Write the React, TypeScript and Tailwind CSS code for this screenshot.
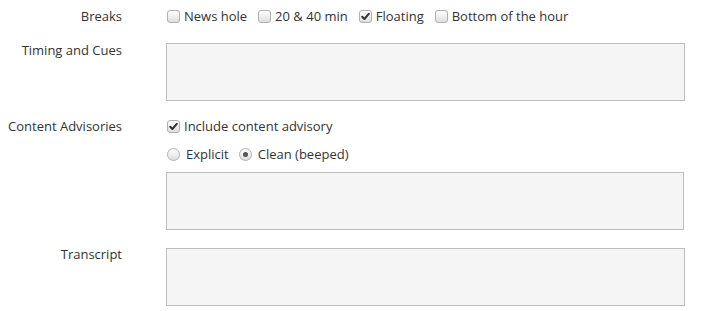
import React from "react";

const Box = ({ checked = false }: { checked?: boolean }) => (
  <span className="relative inline-block h-[13px] w-[13px] shrink-0 rounded-[3px] border border-[#b0b0b0] bg-gradient-to-b from-[#ffffff] to-[#dedede]">
    {checked && (
      <svg viewBox="0 0 13 13" className="absolute -left-px -top-px h-[13px] w-[13px]">
        <path d="M3.2 6.8 L5.4 9 L9.8 3.8" fill="none" stroke="#333" strokeWidth="2" strokeLinecap="round" strokeLinejoin="round" />
      </svg>
    )}
  </span>
);

const Radio = ({ checked = false }: { checked?: boolean }) => (
  <span className="relative flex h-[13px] w-[13px] shrink-0 items-center justify-center rounded-full border border-[#b0b0b0] bg-gradient-to-b from-[#ffffff] to-[#dedede]">
    {checked && <span className="h-[5px] w-[5px] rounded-full bg-[#555]" />}
  </span>
);

const Check = ({ label, checked }: { label: string; checked?: boolean }) => (
  <label className="mr-[11px] flex items-center gap-[4px]">
    <Box checked={checked} />
    <span>{label}</span>
  </label>
);

const Option = ({ label, checked }: { label: string; checked?: boolean }) => (
  <label className="mr-[10px] flex items-center gap-[6px]">
    <Radio checked={checked} />
    <span>{label}</span>
  </label>
);

const Area = ({ className = "" }: { className?: string }) => (
  <textarea className={`block h-[58px] w-full resize-none border border-[#bdbdbd] bg-[#f5f5f5] ${className}`} />
);

export default function App() {
  return (
    <div
      className="min-h-[311px] bg-white pr-[19px] pt-[6px] text-[13px] leading-[20px] text-[#333]"
      style={{ fontFamily: '"Open Sans", sans-serif' }}
    >
      <div className="grid grid-cols-[122px_1fr] gap-x-[44px]">
        <div className="text-right">Breaks</div>
        <div className="flex items-center pl-px">
          <Check label="News hole" />
          <Check label="20 & 40 min" />
          <Check label="Floating" checked />
          <Check label="Bottom of the hour" />
        </div>

        <div className="mt-[14px] text-right">Timing and Cues</div>
        <div className="mt-[17px]">
          <Area />
        </div>

        <div className="mt-[15px] text-right">Content Advisories</div>
        <div className="mt-[15px] flex flex-col gap-[8px] pl-px">
          <Check label="Include content advisory" checked />
          <div className="flex items-center">
            <Option label="Explicit" />
            <Option label="Clean (beeped)" checked />
          </div>
          <Area className="-ml-px" />
        </div>

        <div className="mt-[14px] text-right">Transcript</div>
        <div className="mt-[18px]">
          <Area className="h-[57px]" />
        </div>
      </div>
    </div>
  );
}
